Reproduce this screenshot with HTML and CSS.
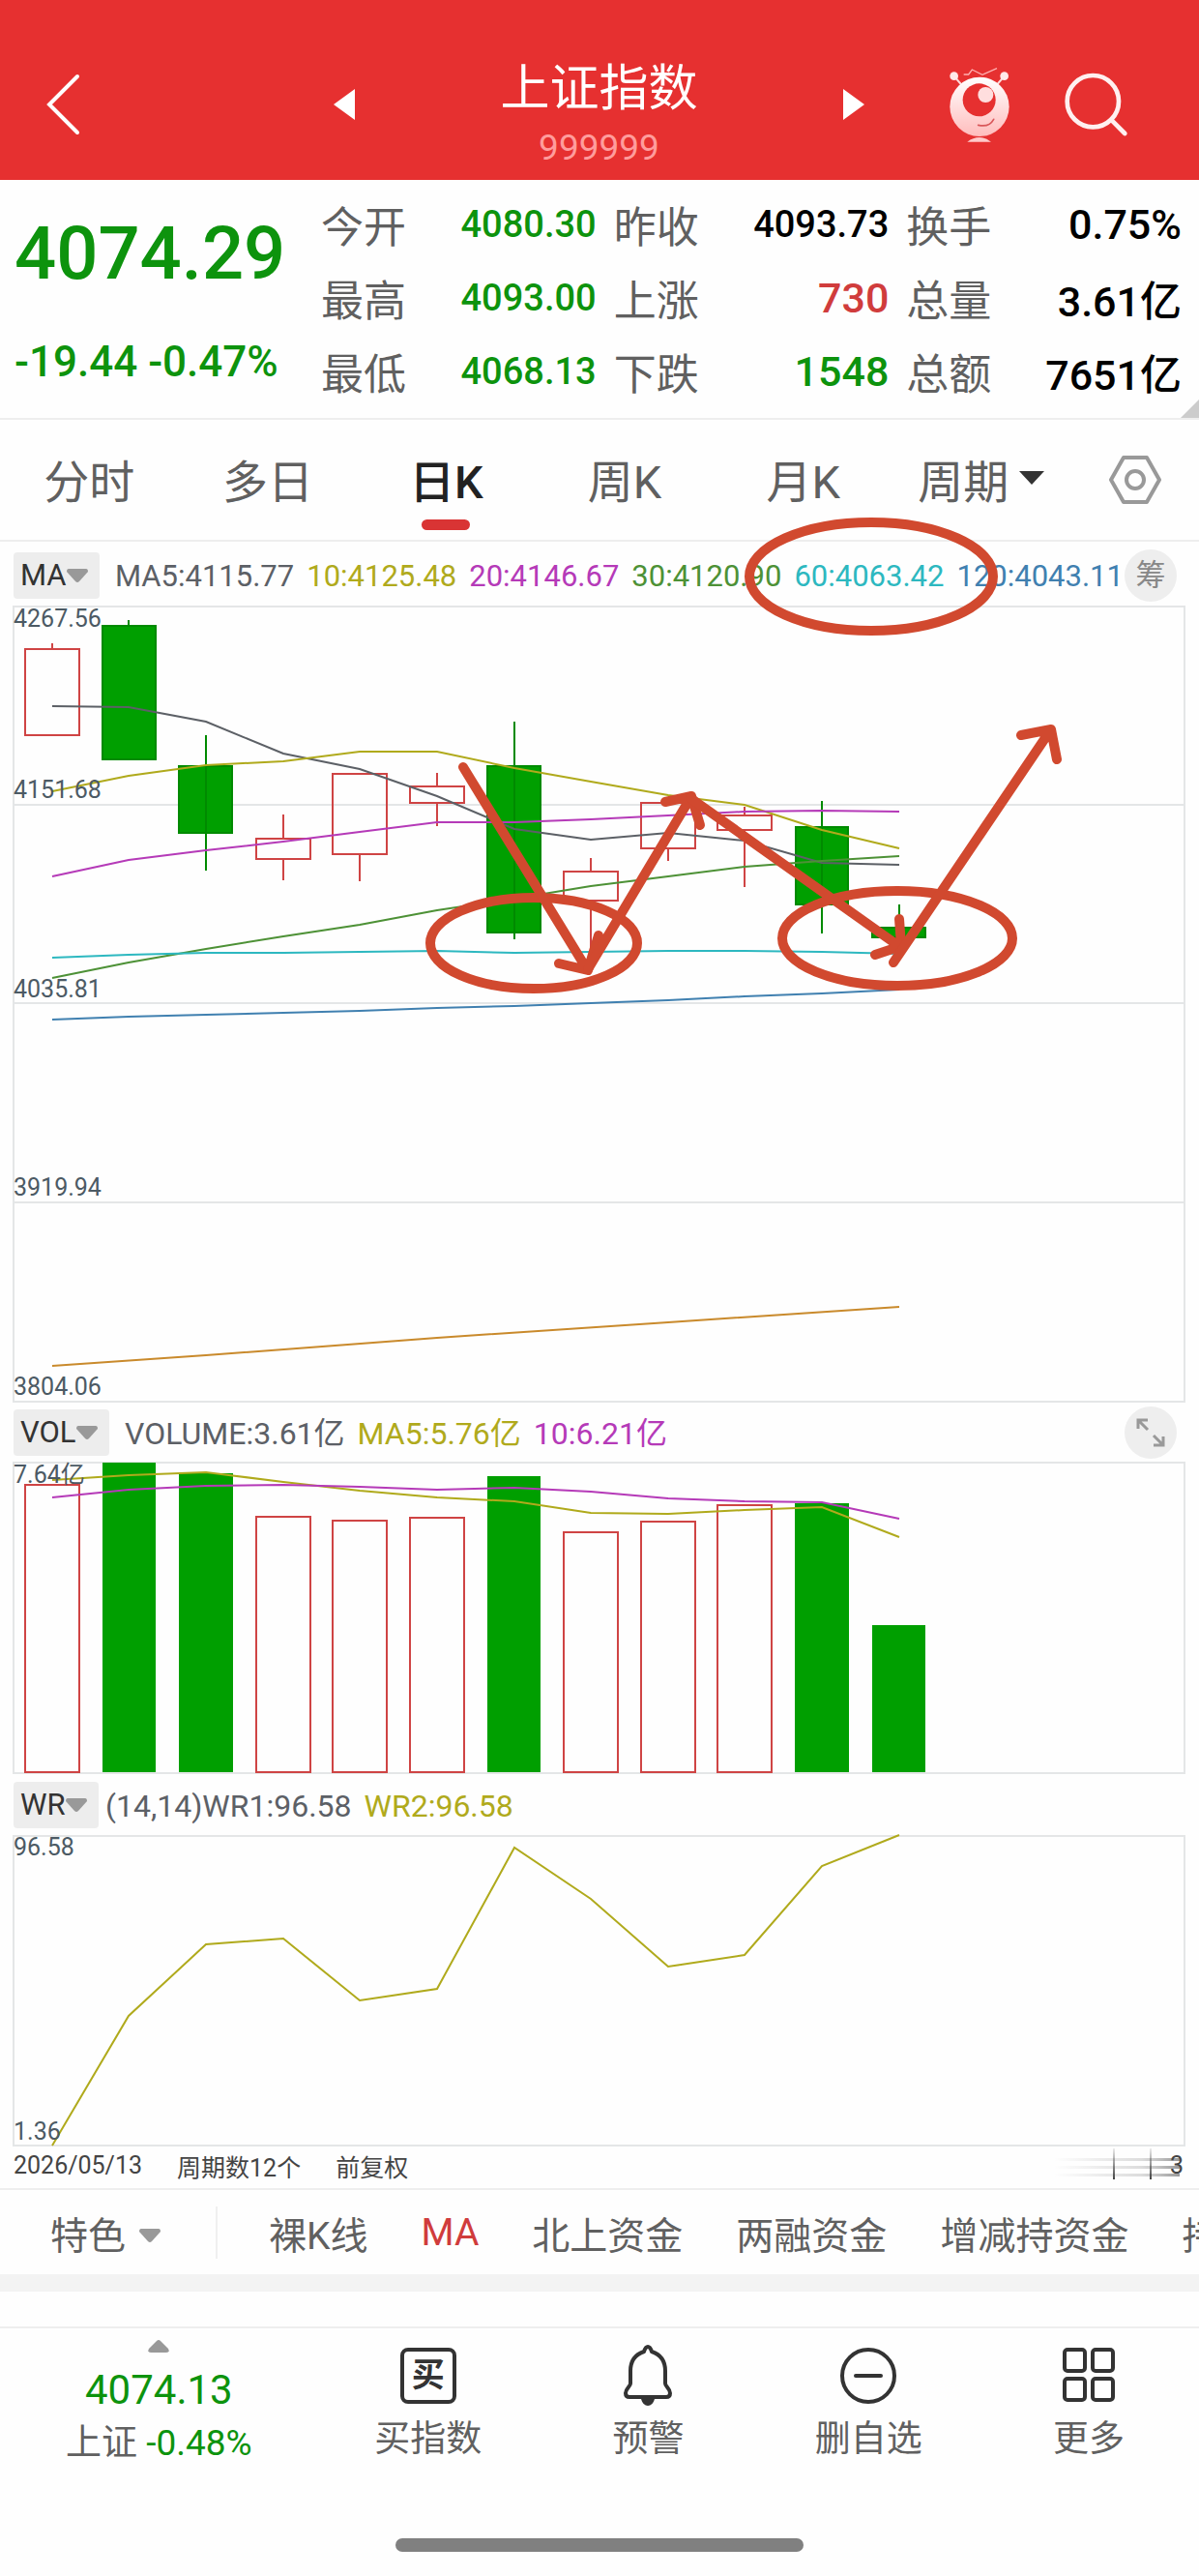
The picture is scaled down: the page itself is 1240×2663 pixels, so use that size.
FILE: index.html
```html
<!DOCTYPE html>
<html lang="zh-CN">
<head>
  <meta charset="UTF-8" />
  <meta name="viewport" content="width=device-width, initial-scale=1.0"/>
  <title>上证指数 999999</title>
  <link rel="stylesheet" href="styles.css">
</head>
<body>

  <header class="topbar">
    <button class="icon-btn topbar__back" aria-label="返回">
      <svg width="36" height="64" viewBox="0 0 36 64"><path d="M32 3 3 32l29 29" fill="none" stroke="#fff" stroke-width="4" stroke-linecap="round"/></svg>
    </button>
    <div class="topbar__center">
      <button class="icon-btn" aria-label="上一个">
        <svg width="22" height="32" viewBox="0 0 22 32"><path d="M22 0v32L0 16z" fill="#fff"/></svg>
      </button>
      <div class="topbar__title">
        <h1>上证指数</h1>
        <span>999999</span>
      </div>
      <button class="icon-btn" aria-label="下一个">
        <svg width="22" height="32" viewBox="0 0 22 32"><path d="M0 0v32l22-16z" fill="#fff"/></svg>
      </button>
    </div>
    <div class="topbar__actions">
      <button class="icon-btn" aria-label="助手">
        <svg width="64" height="80" viewBox="0 0 192 240">
          <defs>
            <linearGradient id="robot" x1="0" y1="0" x2="0" y2="1">
              <stop offset="0" stop-color="#fff"/>
              <stop offset="1" stop-color="#ffbcbc"/>
            </linearGradient>
          </defs>
          <path d="M47 27h15l11-15 32 16 45-20" fill="none" stroke="#ffb0b0" stroke-width="4"/>
          <path d="M17 32l24 28M173 32l-24 28" stroke="#ffdada" stroke-width="6"/>
          <circle cx="17" cy="32" r="13" fill="#ffe9e9"/>
          <circle cx="173" cy="32" r="13" fill="#ffe9e9"/>
          <circle cx="96" cy="127" r="92" fill="url(#robot)"/>
          <circle cx="95" cy="106" r="51" fill="#e63030"/>
          <circle cx="115" cy="90" r="24" fill="#ffdede"/>
          <path d="M92 184q34 8 48-18" fill="none" stroke="#d9575a" stroke-width="5" stroke-linecap="round"/>
          <path d="M58 236q37-28 74 0z" fill="#ffcaca"/>
        </svg>
      </button>
      <button class="icon-btn" aria-label="搜索">
        <svg width="68" height="68" viewBox="0 0 204 204"><g fill="none" stroke="#fff0f0" stroke-width="14" stroke-linecap="round"><circle cx="94" cy="92" r="80"/><path d="M153 152l40 40"/></g></svg>
      </button>
    </div>
  </header>

  <section class="quote">
    <div class="quote__main down">
      <strong class="quote__price">4074.29</strong>
      <span class="quote__change">-19.44 -0.47%</span>
    </div>
    <dl class="quote__stats">
      <div><dt>今开</dt><dd class="small down">4080.30</dd></div>
      <div><dt>昨收</dt><dd class="small">4093.73</dd></div>
      <div><dt>换手</dt><dd>0.75%</dd></div>
      <div><dt>最高</dt><dd class="small down">4093.00</dd></div>
      <div><dt>上涨</dt><dd class="up">730</dd></div>
      <div><dt>总量</dt><dd>3.61亿</dd></div>
      <div><dt>最低</dt><dd class="small down">4068.13</dd></div>
      <div><dt>下跌</dt><dd class="down">1548</dd></div>
      <div><dt>总额</dt><dd>7651亿</dd></div>
    </dl>
  </section>

  <nav class="tabs">
    <button>分时</button>
    <button>多日</button>
    <button class="active">日K</button>
    <button>周K</button>
    <button>月K</button>
    <button>周期<svg width="28" height="14" viewBox="0 0 28 14"><path d="M1 0h26L14 14z" fill="#333"/></svg></button>
    <button class="tabs__settings" aria-label="设置">
      <svg width="56" height="52" viewBox="0 0 56 52"><g fill="none" stroke="#999" stroke-width="4" stroke-linejoin="round"><path d="M16 3h24l13 23-13 23H16L3 26z"/><circle cx="28" cy="26" r="9"/></g></svg>
    </button>
  </nav>

  <!-- K line -->
  <section class="panel">
    <div class="legend legend--main">
      <label class="picker">
        <select aria-label="主图指标"><option>MA</option></select>
        <svg width="22" height="14" viewBox="0 0 22 14"><path d="M2 0h18q2 0 2 3L13 13q-2 2-4 0L0 3q0-3 2-3z" fill="#999"/></svg>
      </label>
      <p class="legend__values">
        <span class="ma5">MA5:4115.77</span>
        <span class="ma10">10:4125.48</span>
        <span class="ma20">20:4146.67</span>
        <span class="ma30">30:4120.90</span>
        <span class="ma60">60:4063.42</span>
        <span class="ma120">120:4043.11</span>
      </p>
      <button class="round-btn">筹</button>
    </div>
    <svg class="chart" viewBox="0 0 1240 824">
      <g class="grid">
        <path d="M14 1H1225V823H14zM14 206H1225M14 411H1225M14 617H1225"/>
      </g>
      <g class="candle-up">
        <path d="M54 39V45M26 45H82V134H26z"/>
        <path d="M293 216V241M293 262V284M265 241H321V262H265z"/>
        <path d="M372 257V285M344 174H400V257H344z"/>
        <path d="M452 173V187M452 204V228M424 187H480V204H424z"/>
        <path d="M611 261V275M611 305V364M583 275H639V305H583z"/>
        <path d="M691 251V264M663 204H719V251H663z"/>
        <path d="M770 208V217M770 232V291M742 217H798V232H742z"/>
      </g>
      <g class="candle-down">
        <path d="M133 15V21M106 21H161V159H106z"/>
        <path d="M213 134V274M185 166H240V235H185z"/>
        <path d="M532 120V345M504 166H559V338H504z"/>
        <path d="M850 202V339M823 229H877V309H823z"/>
        <path d="M930 309V357M902 333H957V343H902z"/>
      </g>
      <g class="lines">
        <polyline class="ma5" points="54,104 133,105 213,120 293,153 372,169 452,197 532,231 611,242 691,235 770,243 850,266 930,268"/>
        <polyline class="ma10" points="54,192 133,176 213,165 293,161 372,151 452,151 532,168 611,182 691,196 770,206 850,232 930,251"/>
        <polyline class="ma20" points="54,280 133,263 213,253 293,244 372,234 452,224 532,224 611,221 691,217 770,213 850,212 930,213"/>
        <polyline class="ma30" points="54,385 133,369 213,355 293,342 372,330 452,315 532,303 611,290 691,280 770,270 850,264 930,259"/>
        <polyline class="ma60" points="54,364 133,361 213,359 293,359 372,358 452,357 532,359 611,358 691,357 770,357 850,358 930,360"/>
        <polyline class="ma120" points="54,428 133,425 213,423 293,421 372,419 452,416 532,414 611,411 691,408 770,404 850,401 930,397"/>
        <polyline class="ma250" points="54,786 213,775 452,757 691,741 930,725"/>
      </g>
      <g class="axis">
        <text x="14" y="22">4267.56</text>
        <text x="14" y="199">4151.68</text>
        <text x="14" y="405">4035.81</text>
        <text x="14" y="610">3919.94</text>
        <text x="14" y="816">3804.06</text>
      </g>
      <!-- hand-drawn marks -->
      <g class="marks">
        <ellipse cx="901" cy="-30" rx="126" ry="56"/>
        <ellipse cx="552" cy="349" rx="107" ry="47"/>
        <ellipse cx="928" cy="344" rx="119" ry="49"/>
        <path d="M479 167L607 376M578 370L608 377L619 341"/>
        <path d="M608 376L714 199M688 203L715 197L724 227"/>
        <path d="M714 199L931 353M930 324L932 352L905 361"/>
        <path d="M924 369L1087 128M1056 134L1087 128L1093 159"/>
      </g>
    </svg>
  </section>

  <!-- Volume -->
  <section class="panel">
    <div class="legend">
      <label class="picker">
        <select aria-label="副图指标一"><option>VOL</option></select>
        <svg width="22" height="14" viewBox="0 0 22 14"><path d="M2 0h18q2 0 2 3L13 13q-2 2-4 0L0 3q0-3 2-3z" fill="#999"/></svg>
      </label>
      <p class="legend__values legend__values--wide">
        <span class="ma5">VOLUME:3.61亿</span>
        <span class="ma10">MA5:5.76亿</span>
        <span class="ma20">10:6.21亿</span>
      </p>
      <button class="round-btn" aria-label="展开">
        <svg width="30" height="30" viewBox="0 0 30 30"><path d="M2 11V2h10M2 2l10 10M28 19v9H18M28 28L18 18" fill="none" stroke="#999" stroke-width="3"/></svg>
      </button>
    </div>
    <svg class="chart" viewBox="0 0 1240 322">
      <g class="grid">
        <path d="M14 0H1225V321H14z"/>
      </g>
      <g class="candle-up">
        <path d="M26 23H82V320H26zM265 56H321V320H265zM344 60H400V320H344zM424 57H480V320H424z"/>
        <path d="M583 72H639V320H583zM663 61H719V320H663zM742 44H798V320H742z"/>
      </g>
      <g class="bar-down">
        <path d="M106 0H161V320H106zM185 11H241V320H185zM504 14H559V320H504z"/>
        <path d="M822 42H878V320H822zM902 168H957V320H902z"/>
      </g>
      <g class="lines">
        <polyline class="ma10" points="54,18 133,13 213,10 293,20 372,29 452,36 532,40 611,52 691,53 770,49 850,46 930,77"/>
        <polyline class="ma20" points="54,36 133,28 213,24 293,23 372,25 452,28 532,26 611,30 691,37 770,40 850,41 930,58"/>
      </g>
      <g class="axis">
        <text x="14" y="21">7.64亿</text>
      </g>
    </svg>
  </section>

  <!-- Williams %R -->
  <section class="panel">
    <div class="legend legend--wr">
      <label class="picker">
        <select aria-label="副图指标二"><option>WR</option></select>
        <svg width="22" height="14" viewBox="0 0 22 14"><path d="M2 0h18q2 0 2 3L13 13q-2 2-4 0L0 3q0-3 2-3z" fill="#999"/></svg>
      </label>
      <p class="legend__values legend__values--wide legend__values--near">
        <span class="ma5">(14,14)WR1:96.58</span>
        <span class="ma10">WR2:96.58</span>
      </p>
    </div>
    <svg class="chart" viewBox="0 0 1240 322">
      <g class="grid">
        <path d="M14 1H1225V321H14z"/>
      </g>
      <g class="lines">
        <polyline class="ma10" points="54,321 133,187 213,113 293,107 372,171 452,159 532,13 611,66 691,136 770,124 850,32 930,0"/>
      </g>
      <g class="axis">
        <text x="14" y="21">96.58</text>
        <text x="14" y="315">1.36</text>
      </g>
    </svg>
    <div class="period">
      <span>2026/05/13</span>
      <span>周期数12个</span>
      <span>前复权</span>
      <span class="period__end">
        <svg width="130" height="36" viewBox="0 0 130 36">
          <defs>
            <linearGradient id="fadeX"><stop offset="0" stop-color="#777" stop-opacity="0"/><stop offset=".7" stop-color="#777" stop-opacity=".25"/><stop offset="1" stop-color="#555" stop-opacity=".6"/></linearGradient>
            <linearGradient id="fadeY" x2="0" y2="1"><stop offset="0" stop-color="#444" stop-opacity=".1"/><stop offset="1" stop-color="#444"/></linearGradient>
          </defs>
          <path d="M0 10h130v3H0zM0 18h130v3H0zM0 26h130v3H0z" fill="url(#fadeX)"/>
          <path d="M61 0h2v32h-2zM99 0h2v32h-2z" fill="url(#fadeY)"/>
        </svg>3</span>
    </div>
  </section>

  <nav class="features">
    <button class="features__menu">特色<svg width="24" height="14" viewBox="0 0 22 14"><path d="M2 0h18q2 0 2 3L13 13q-2 2-4 0L0 3q0-3 2-3z" fill="#999"/></svg></button>
    <div class="features__list">
      <button>裸K线</button>
      <button class="active">MA</button>
      <button>北上资金</button>
      <button>两融资金</button>
      <button>增减持资金</button>
      <button>持</button>
    </div>
  </nav>

  <footer class="bottom">
    <button class="bottom__index">
      <svg width="22" height="13" viewBox="0 0 22 13"><path d="M9 1q2-2 4 0l8 8q2 4-2 4H3q-4 0-2-4z" fill="#999"/></svg>
      <span class="bottom__price down">4074.13</span>
      <span>上证 <span class="down">-0.48%</span></span>
    </button>
    <button>
      <span class="buy-icon">买</span>
      <span>买指数</span>
    </button>
    <button>
      <svg width="56" height="64" viewBox="0 0 56 64"><path d="M28 3c2 0 3 2 4 5 9 3 14 10 14 20v13c0 3 5 5 5 10 0 3-2 4-4 4H9c-2 0-4-1-4-4 0-5 5-7 5-10V28C10 18 15 11 24 8c1-3 2-5 4-5z" fill="none" stroke="#333" stroke-width="4" stroke-linejoin="round"/><path d="M21 57h14q-2 7-7 7t-7-7z" fill="#333"/></svg>
      <span>预警</span>
    </button>
    <button>
      <svg width="60" height="64" viewBox="0 0 60 64"><g fill="none" stroke="#333" stroke-width="4" stroke-linecap="round"><circle cx="30" cy="33" r="27"/><path d="M17 33h26"/></g></svg>
      <span>删自选</span>
    </button>
    <button>
      <svg width="56" height="64" viewBox="0 0 56 64"><g fill="none" stroke="#333" stroke-width="4"><rect x="3" y="6" width="21" height="22" rx="3"/><rect x="32" y="6" width="21" height="22" rx="3"/><rect x="3" y="36" width="21" height="22" rx="3"/><rect x="32" y="36" width="21" height="22" rx="3"/></g></svg>
      <span>更多</span>
    </button>
  </footer>
  <div class="home-bar"></div>

</body>
</html>
```
FILE: styles.css
```css
* {
  box-sizing: border-box;
  margin: 0;
  padding: 0;
}

body {
  font-family: Roboto, "Noto Sans CJK SC", sans-serif;
  background-color: #fefefe;
  color: #606060;
  overflow-x: hidden;
}

button,
select {
  font: inherit;
  color: inherit;
  background: none;
  border: none;
  cursor: pointer;
  white-space: nowrap;
}

svg {
  display: block;
  flex-shrink: 0;
}

.down {
  color: #0d930d;
}

.up {
  color: #d03c3c;
}

/* Top bar */
.topbar {
  display: grid;
  grid-template-columns: 1fr auto 1fr;
  align-items: center;
  height: 186px;
  padding: 30px 73px 0 48px;
  background-color: #e63030;
  color: #fff;
}

.icon-btn {
  display: block;
}

.topbar__back {
  justify-self: start;
}

.topbar__center {
  display: flex;
  align-items: center;
  gap: 150px;
  margin-left: 24px;
}

.topbar__title {
  display: flex;
  flex-direction: column;
  align-items: center;
  padding-top: 17px;
}

.topbar__title h1 {
  font-size: 51px;
  font-weight: 400;
  line-height: 72px;
}

.topbar__title span {
  font-size: 37px;
  line-height: 50px;
  color: #ff9c9c;
}

.topbar__actions {
  display: flex;
  justify-content: flex-end;
  align-items: center;
  gap: 54px;
}

/* Quote */
.quote {
  position: relative;
  display: flex;
  padding: 8px 18px 10px 15px;
  border-bottom: 2px solid #eee;
}

/* folded corner */
.quote::after {
  content: "";
  position: absolute;
  right: 0;
  bottom: 0;
  border-style: solid;
  border-width: 0 0 19px 19px;
  border-color: transparent transparent #ccc transparent;
}

.quote__main {
  flex: 0 0 317px;
  display: flex;
  flex-direction: column;
  font-weight: 500;
}

.quote__price {
  font-size: 76px;
  font-weight: 500;
  line-height: 136px;
}

.quote__change {
  font-size: 44px;
  line-height: 88px;
}

.quote__stats {
  flex: 1;
  display: grid;
  grid-template-columns: repeat(3, 1fr);
  column-gap: 18px;
}

.quote__stats div {
  display: flex;
  justify-content: space-between;
  align-items: center;
  height: 76px;
}

.quote__stats dt {
  font-size: 44px;
}

.quote__stats dd {
  font-size: 43px;
  font-weight: 500;
}

.quote__stats dd:not(.down):not(.up) {
  color: #000;
}

.quote__stats .small {
  font-size: 38px;
}

/* Period tabs */
.tabs {
  display: flex;
  height: 126px;
  border-bottom: 2px solid #eee;
}

.tabs button {
  position: relative;
  flex: 184 1 0;
  display: flex;
  justify-content: center;
  align-items: center;
  gap: 10px;
  padding-bottom: 4px;
  font-size: 47px;
}

.tabs .tabs__settings {
  flex-grow: 132;
  padding-bottom: 0;
}

.tabs .active {
  color: #222;
  font-weight: 500;
}

.tabs .active::after {
  content: "";
  position: absolute;
  bottom: 10px;
  width: 50px;
  height: 11px;
  border-radius: 6px;
  background-color: #d93434;
}

/* Chart panels */
.legend {
  display: flex;
  align-items: center;
  height: 62px;
  padding: 0 23px 0 14px;
  font-size: 31px;
  line-height: 48px;
}

.legend--main {
  height: 66px;
  padding-top: 4px;
}

.legend--wr {
  height: 63px;
}

.picker {
  display: flex;
  align-items: center;
  height: 48px;
  padding: 0 12px 0 7px;
  border-radius: 4px;
  background-color: #ededed;
  color: #333;
}

.picker select {
  appearance: none;
  height: 48px;
}

.legend__values {
  flex: 1;
  display: flex;
  gap: 13px;
  padding: 2px 0 0 16px;
  white-space: nowrap;
}

.legend__values--wide {
  font-size: 32px;
}

.legend__values--near {
  padding-left: 7px;
}

.round-btn {
  display: flex;
  justify-content: center;
  align-items: center;
  flex-shrink: 0;
  width: 54px;
  height: 54px;
  border-radius: 50%;
  background-color: #eee;
  color: #888;
}

.chart {
  width: 100%;
  height: auto;
  overflow: visible;
  pointer-events: none;
}

.grid path {
  fill: none;
  stroke: #e4e6e7;
  stroke-width: 2;
}

.candle-up path {
  fill: none;
  stroke: #cf4444;
  stroke-width: 2;
}

.candle-down path {
  fill: #009f00;
  stroke: #008a00;
  stroke-width: 2;
}

.bar-down path {
  fill: #009f00;
}

.lines polyline {
  fill: none;
  stroke: currentColor;
  stroke-width: 2;
}

.axis text {
  font-size: 25px;
  fill: #4c5a64;
}

.marks {
  fill: none;
  stroke: #d1492f;
  stroke-width: 10;
  stroke-linecap: round;
  stroke-linejoin: round;
}

.ma5 { color: #5c6066; }
.ma10 { color: #b0aa1c; }
.ma20 { color: #b53ab8; }
.ma30 { color: #4d9136; }
.ma60 { color: #2db8c0; }
.ma120 { color: #4080b0; }
.ma250 { color: #c98a2c; }

.period {
  display: flex;
  align-items: center;
  gap: 36px;
  height: 43px;
  padding: 0 16px 4px 14px;
  font-size: 25px;
  color: #444;
}

.period__end {
  display: flex;
  align-items: center;
  margin-left: auto;
}

.period__end svg {
  margin-right: -10px;
}

/* Feature list */
.features {
  display: flex;
  align-items: center;
  height: 107px;
  border-top: 2px solid #eee;
  border-bottom: 18px solid #f3f3f3;
  font-size: 39px;
  overflow: hidden;
}

.features__menu {
  display: flex;
  align-items: center;
  gap: 13px;
  height: 54px;
  padding: 0 56px 0 52px;
  border-right: 2px solid #f0f0f0;
}

.features__menu svg {
  margin-top: 6px;
}

.features__list {
  display: flex;
  gap: 55px;
  padding-left: 53px;
}

.features__list .active {
  color: #d03c3c;
}

/* Bottom bar */
.bottom {
  display: flex;
  margin-top: 36px;
  padding-top: 12px;
  border-top: 2px solid #eee;
  font-size: 37px;
  line-height: 50px;
}

.bottom button {
  flex: 228 1 0;
  display: flex;
  flex-direction: column;
  align-items: center;
  justify-content: space-between;
  height: 128px;
  padding-top: 4px;
}

.bottom .bottom__index {
  flex-grow: 329;
  height: 132px;
  padding-top: 0;
}

.bottom__price {
  padding-top: 8px;
  font-size: 42px;
}

.buy-icon {
  width: 58px;
  height: 58px;
  margin-top: 4px;
  border: 4px solid #333;
  border-radius: 8px;
  color: #333;
  font-size: 34px;
  font-weight: 700;
  line-height: 48px;
}

.home-bar {
  width: 34%;
  height: 14px;
  margin: 73px auto 24px;
  border-radius: 7px;
  background-color: #808080;
}
```
